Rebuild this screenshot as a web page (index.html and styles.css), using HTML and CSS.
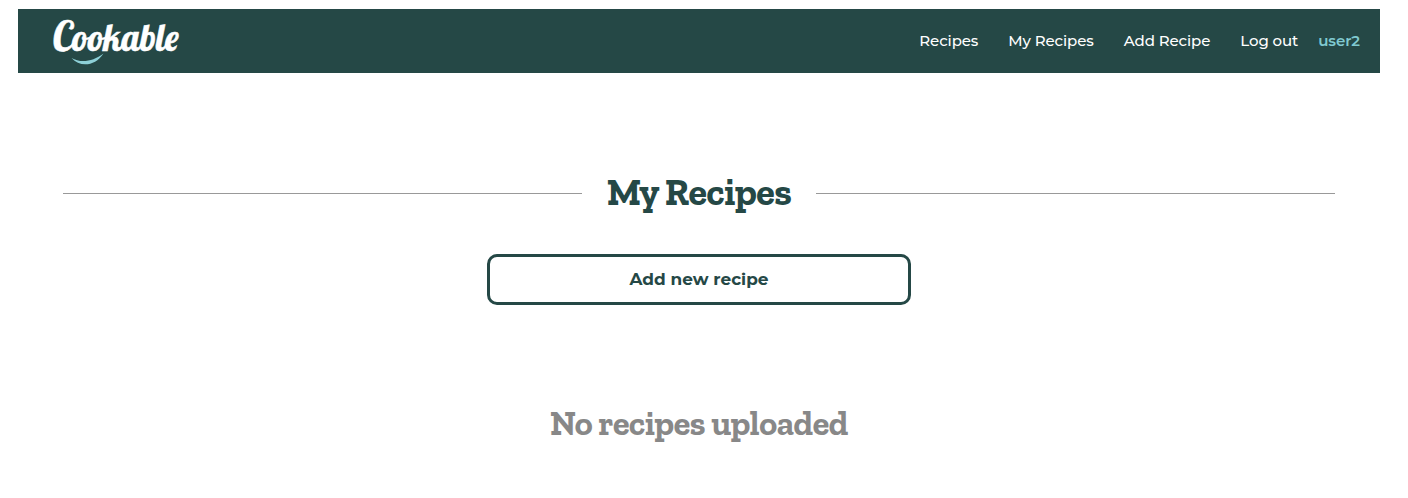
FILE: index.html
```html
<!DOCTYPE html>
<html lang="en">
<head>
<meta charset="utf-8">
<title>Cookable - My Recipes</title>
<link rel="stylesheet" href="styles.css">
</head>
<body>
<header class="navbar">
  <a class="brand" href="#" aria-label="Cookable">
    <svg class="logo" viewBox="0 0 130 50" width="130" height="50">
      <text class="wordmark" x="0" y="33" textLength="127" lengthAdjust="spacingAndGlyphs"><tspan class="initial">C</tspan>ookable</text>
      <path class="smile" d="M19.500 40C29 45.500 41 43.500 51.500 35.500C43 48.500 28 49.500 19.500 40Z"/>
    </svg>
  </a>
  <nav class="links">
    <a class="link" href="#">Recipes</a>
    <a class="link" href="#">My Recipes</a>
    <a class="link" href="#">Add Recipe</a>
    <a class="link" href="#">Log out</a>
    <a class="link user" href="#">user2</a>
  </nav>
</header>
<main class="content">
  <div class="heading">
    <span class="rule"></span>
    <h1 class="title">My Recipes</h1>
    <span class="rule"></span>
  </div>
  <a class="add-button" href="#">Add new recipe</a>
  <h2 class="empty">No recipes uploaded</h2>
</main>
</body>
</html>
```
FILE: styles.css
```css
body {
  margin: 0;
  padding: 9px 28px 0 18px;
  background: #fff;
  font-family: Montserrat, Inter, sans-serif;
}

a {
  color: inherit;
  text-decoration: none;
}

.navbar {
  display: flex;
  justify-content: space-between;
  align-items: center;
  height: 64px;
  padding: 0 20px 0 34px;
  background: #254846;
  color: #fff;
}

.logo {
  display: block;
  margin-top: 3px;
  overflow: visible;
}

.wordmark {
  fill: #fff;
  stroke: #fff;
  stroke-width: 0.5;
  font-family: "Lobster Two", Lobster, "Oleo Script", Pacifico, "Liberation Serif", cursive;
  font-size: 37px;
  font-style: italic;
  font-weight: 700;
}

.initial { font-size: 41px; }
.smile { fill: #8dd0d7; }

.links {
  display: flex;
  gap: 30px;
  font-size: 15px;
  font-weight: 500;
  line-height: 20px;
  letter-spacing: -0.1px;
}

.user {
  margin-left: -10px;
  color: #80cad1;
  font-weight: 600;
}

.content {
  padding: 93px 45px 0;
}

.heading {
  display: flex;
  align-items: center;
  gap: 25px;
  height: 54px;
}

.rule {
  flex: 1;
  height: 1px;
  background: #999;
}

.title,
.empty {
  margin: 0;
  font-family: "Zilla Slab", "DejaVu Serif", serif;
  font-weight: 700;
  white-space: nowrap;
}

.title {
  padding-bottom: 2px;
  color: #254846;
  font-size: 38.2px;
  line-height: 52px;
  letter-spacing: -0.45px;
}

.add-button {
  display: flex;
  align-items: center;
  justify-content: center;
  box-sizing: border-box;
  width: 424px;
  height: 51px;
  margin: 34px auto 0;
  padding-bottom: 2px;
  border: 3px solid #254846;
  border-radius: 10px;
  color: #254846;
  font-size: 16.9px;
  font-weight: 700;
}

.empty {
  margin-top: 99px;
  color: #888;
  font-size: 34.2px;
  line-height: 40px;
  letter-spacing: -0.4px;
  text-align: center;
}
```
